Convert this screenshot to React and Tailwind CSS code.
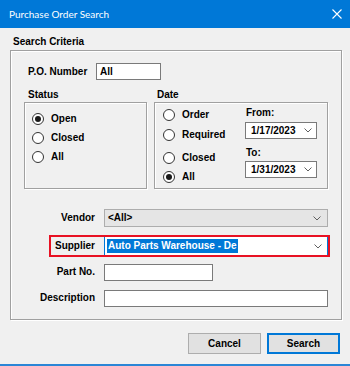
import React from "react";

const groupBox = "border border-[#a0a0a0] shadow-[inset_1px_1px_0_#ffffff,1px_1px_0_#ffffff]";

function Radio({ checked }) {
  return (
    <span className="w-[12px] h-[12px] rounded-full border border-[#333333] bg-white flex items-center justify-center shrink-0">
      {checked && <span className="w-[6px] h-[6px] rounded-full bg-[#1a1a1a]" />}
    </span>
  );
}

function RadioRow({ label, checked, className = "" }) {
  return (
    <div className={`flex items-center gap-[7px] ${className}`}>
      <Radio checked={checked} />
      <span>{label}</span>
    </div>
  );
}

function Chevron() {
  return (
    <svg width="8" height="5" viewBox="0 0 8 5" className="shrink-0">
      <path d="M0.5 0.5 L4 4 L7.5 0.5" fill="none" stroke="#606060" strokeWidth="1" />
    </svg>
  );
}

function DateSelect({ value }) {
  return (
    <div className="h-[17px] w-[72px] bg-white border border-[#7a7a7a] flex items-center justify-between pl-[5px] pr-[4px]">
      <span>{value}</span>
      <Chevron />
    </div>
  );
}

function FieldRow({ label, highlight, className = "", children }) {
  return (
    <div
      className={`flex items-center w-[281px] h-[22px] border-2 ${
        highlight ? "border-[#e81123]" : "border-transparent"
      } ${className}`}
    >
      <div className="w-[44px] shrink-0 flex justify-end">
        <span className="whitespace-nowrap">{label}</span>
      </div>
      <div className="ml-[9px] flex">{children}</div>
    </div>
  );
}

export default function App() {
  return (
    <div className="w-[350px] h-[366px] bg-[#f0f0f0] flex flex-col font-['Liberation_Sans',Arial,sans-serif] text-[10px] font-bold text-black leading-[12px] border-b-2 border-[#2b86d6] overflow-hidden">
      <div className="h-[28px] bg-[#0078d7] flex items-center justify-between pl-[9px] pr-[8px] shrink-0">
        <span className="font-['Lato',sans-serif] font-normal text-[10px] text-white">Purchase Order Search</span>
        <svg width="10" height="10" viewBox="0 0 10 10">
          <path d="M0.5 0.5 L9.5 9.5 M9.5 0.5 L0.5 9.5" stroke="#ffffff" strokeWidth="1.1" />
        </svg>
      </div>

      <div className="pl-[13px] mt-[8px] h-[12px]">Search Criteria</div>

      <div className={`ml-[10px] mt-[2px] w-[332px] h-[270px] ${groupBox}`}>
        <div className="flex items-center mt-[12px] pl-[17px]">
          <span className="w-[68px]">P.O. Number</span>
          <div className="w-[65px] h-[17px] bg-white border border-[#7a7a7a] flex items-center pl-[3px]">All</div>
        </div>

        <div className="flex gap-[7px] ml-[13px] mt-[9px]">
          <div className="w-[123px]">
            <div className="pl-[4px] h-[12px] mb-[1px]">Status</div>
            <div className={`h-[87px] pt-[6px] pl-[7px] ${groupBox}`}>
              <RadioRow label="Open" checked className="h-[19px]" />
              <RadioRow label="Closed" className="h-[19px]" />
              <RadioRow label="All" className="h-[19px]" />
            </div>
          </div>
          <div className="w-[174px]">
            <div className="pl-[3px] h-[12px] mb-[1px]">Date</div>
            <div className={`h-[87px] flex pl-[8px] ${groupBox}`}>
              <div className="w-[82px] pt-[2px]">
                <RadioRow label="Order" className="h-[20px]" />
                <RadioRow label="Required" className="h-[20px]" />
                <RadioRow label="Closed" className="h-[19px] mt-[3px]" />
                <RadioRow label="All" checked className="h-[19px]" />
              </div>
              <div className="pt-[4px]">
                <div className="h-[12px] pl-[1px]">From:</div>
                <div className="mt-[3px]">
                  <DateSelect value="1/17/2023" />
                </div>
                <div className="h-[12px] mt-[8px] pl-[1px]">To:</div>
                <div className="mt-[2px]">
                  <DateSelect value="1/31/2023" />
                </div>
              </div>
            </div>
          </div>
        </div>

        <div className="ml-[38px] mt-[18px]">
          <FieldRow label="Vendor">
            <div className="w-[224px] h-[18px] bg-[#e5e5e5] border border-[#adadad] flex items-center justify-between pl-[3px] pr-[6px]">
              <span>&lt;All&gt;</span>
              <Chevron />
            </div>
          </FieldRow>
          <FieldRow label="Supplier" highlight className="mt-[6px]">
            <div className="w-[224px] h-[18px] bg-white border-x border-x-[#0078d7] flex items-center justify-between pl-[2px] pr-[5px]">
              <span className="bg-[#0078d7] text-white px-[1px] leading-[14px] whitespace-nowrap">Auto Parts Warehouse - De</span>
              <Chevron />
            </div>
          </FieldRow>
          <FieldRow label="Part No." className="mt-[4px]">
            <div className="w-[109px] h-[17px] bg-white border border-[#7a7a7a]" />
          </FieldRow>
          <FieldRow label="Description" className="mt-[4px]">
            <div className="w-[224px] h-[17px] bg-white border border-[#7a7a7a]" />
          </FieldRow>
        </div>
      </div>

      <div className="flex justify-end gap-[6px] mt-[13px] mr-[10px]">
        <button className="w-[73px] h-[21px] bg-[#e1e1e1] border border-[#adadad] flex items-center justify-center">Cancel</button>
        <button className="w-[73px] h-[21px] bg-[#e1e1e1] border-2 border-[#0078d7] flex items-center justify-center">Search</button>
      </div>
    </div>
  );
}
